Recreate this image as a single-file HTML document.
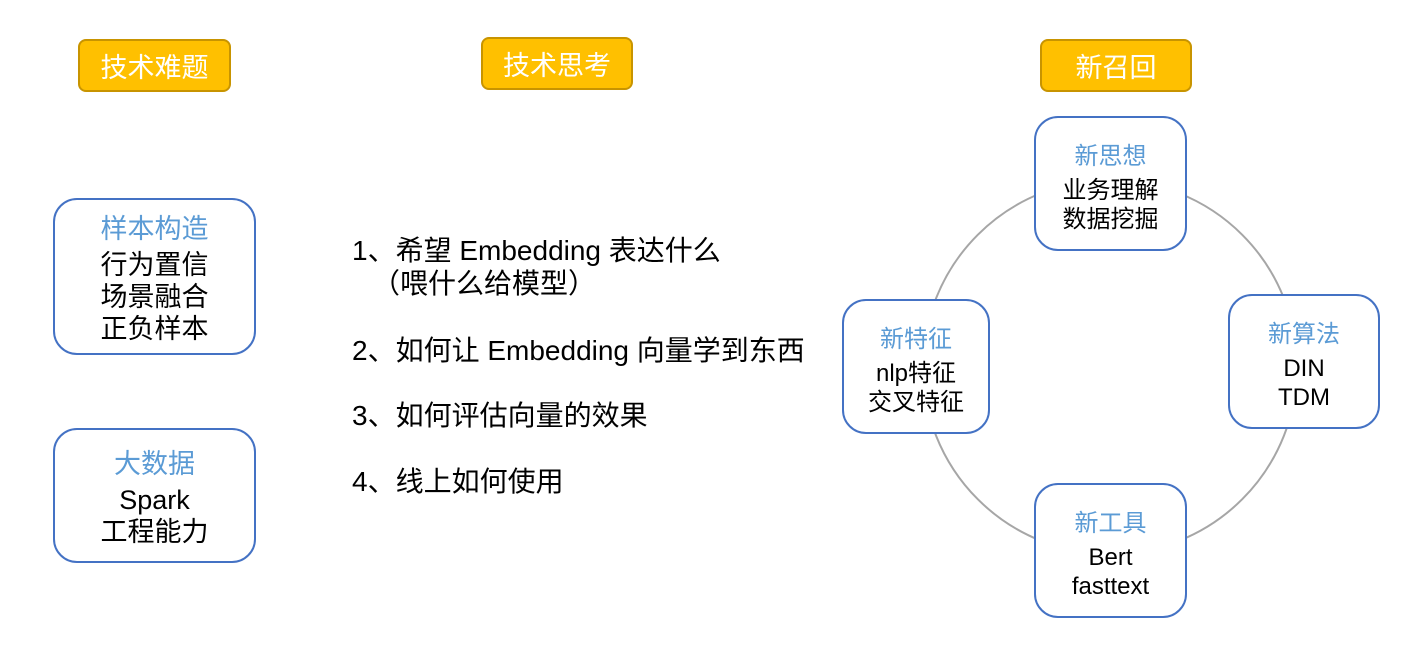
<!DOCTYPE html>
<html><head><meta charset="utf-8"><style>
body{margin:0;width:1428px;height:647px;background:#fff;position:relative;overflow:hidden;font-family:"Liberation Sans","Noto Sans CJK SC",sans-serif;}
.y{position:absolute;background:#ffc000;border:2px solid #c89400;border-radius:8px;color:#fff;font-size:27px;display:flex;align-items:center;justify-content:center;box-sizing:border-box;}
.b{position:absolute;border:2px solid #4472c4;border-radius:24px;box-sizing:border-box;background:#fff;display:flex;flex-direction:column;align-items:center;justify-content:center;text-align:center;font-size:27px;line-height:32px;color:#000;}
.b .t{color:#5b9bd5;}
.c{font-size:24px;line-height:29px;padding-top:8px;}
.l{position:absolute;left:352px;font-size:28px;color:#000;line-height:34px;}
</style></head><body>
<svg style="position:absolute;left:0;top:0" width="1428" height="647"><circle cx="1110" cy="367" r="187" fill="none" stroke="#a6a6a6" stroke-width="2"/></svg>
<div class="y" style="left:78px;top:39px;width:153px;height:53px">技术难题</div>
<div class="y" style="left:481px;top:37px;width:152px;height:53px">技术思考</div>
<div class="y" style="left:1040px;top:39px;width:152px;height:53px">新召回</div>
<div class="b" style="left:53px;top:198px;width:203px;height:157px;padding-top:4px"><div class="t" style="margin-bottom:4px">样本构造</div><div>行为置信</div><div>场景融合</div><div>正负样本</div></div>
<div class="b" style="left:53px;top:428px;width:203px;height:135px;padding-top:4px"><div class="t" style="margin-bottom:4px">大数据</div><div>Spark</div><div>工程能力</div></div>
<div class="l" style="top:234px">1、希望 Embedding 表达什么</div>
<div class="l" style="top:267px;left:372px">（喂什么给模型）</div>
<div class="l" style="top:334px">2、如何让 Embedding 向量学到东西</div>
<div class="l" style="top:399px">3、如何评估向量的效果</div>
<div class="l" style="top:465px">4、线上如何使用</div>
<div class="b c" style="left:1034px;top:116px;width:153px;height:135px"><div class="t" style="margin-bottom:5px">新思想</div><div>业务理解</div><div>数据挖掘</div></div>
<div class="b c" style="left:842px;top:299px;width:148px;height:135px"><div class="t" style="margin-bottom:5px">新特征</div><div>nlp特征</div><div>交叉特征</div></div>
<div class="b c" style="left:1228px;top:294px;width:152px;height:135px"><div class="t" style="margin-bottom:5px">新算法</div><div>DIN</div><div>TDM</div></div>
<div class="b c" style="left:1034px;top:483px;width:153px;height:135px"><div class="t" style="margin-bottom:5px">新工具</div><div>Bert</div><div>fasttext</div></div>
</body></html>
